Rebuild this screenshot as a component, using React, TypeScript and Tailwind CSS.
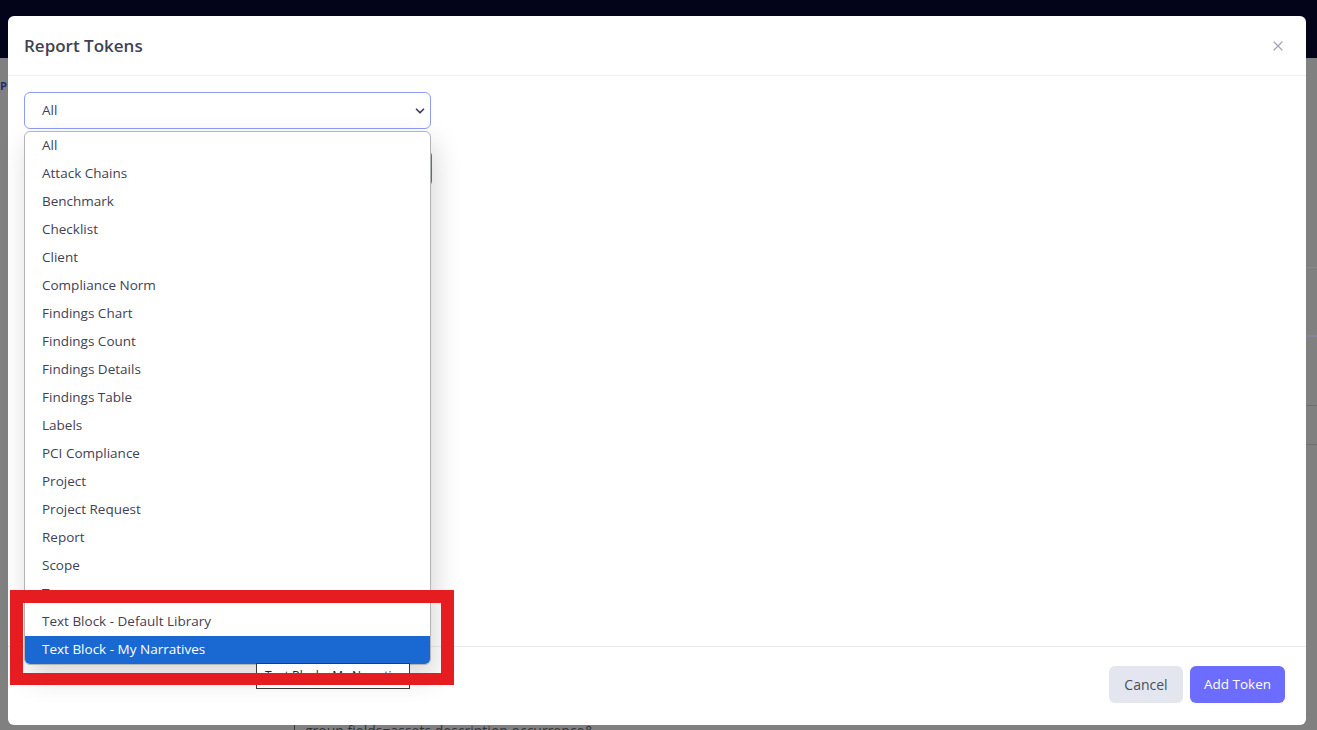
import { X, ChevronDown } from 'lucide-react'

const options = [
  'All',
  'Attack Chains',
  'Benchmark',
  'Checklist',
  'Client',
  'Compliance Norm',
  'Findings Chart',
  'Findings Count',
  'Findings Details',
  'Findings Table',
  'Labels',
  'PCI Compliance',
  'Project',
  'Project Request',
  'Report',
  'Scope',
  'Team',
  'Text Block - Default Library',
  'Text Block - My Narratives',
]

const selected = 'Text Block - My Narratives'

export default function App() {
  return (
    <div
      className="relative h-[730px] w-[1317px] overflow-hidden"
      style={{ fontFamily: '"Open Sans", "Noto Sans", sans-serif' }}
    >
      {/* Page underneath (dimmed) */}
      <div className="flex h-full flex-col">
        <div className="h-[58px] shrink-0 bg-[#03041a]" />
        <div className="flex min-h-0 flex-1 overflow-hidden bg-[#808080]">
          <div className="w-[8px] shrink-0 pt-[14px]">
            <span className="text-[11px] font-bold leading-none text-[#1f2a6b]">P</span>
          </div>
          <div className="flex flex-1 flex-col">
            <div className="h-[209px] shrink-0" />
            <div className="h-[68px] shrink-0 border-t border-[#8a8a8a]" />
            <div className="h-[70px] shrink-0 border-t-2 border-[#85849a]" />
            <div className="h-[39px] shrink-0 border-t border-[#6f6f6f]" />
            <div className="h-[278px] shrink-0 border-t border-[#6f6f6f]" />
            <div className="ml-[286px] shrink-0 border-l border-[#3a3a3a] pl-[10px] text-[14px] leading-[18px] text-[#333338]">
              group.fields=assets,description,occurrence&amp;
            </div>
          </div>
        </div>
      </div>

      {/* Modal */}
      <div className="absolute left-[8px] top-[16px] flex h-[709px] w-[1298px] flex-col rounded-md bg-white">
        <div className="flex h-[60px] shrink-0 items-center justify-between border-b border-[#eceef3] pl-4 pr-[20px]">
          <h2 className="text-[17px] font-semibold text-[#3f4254]">Report Tokens</h2>
          <X className="h-[16px] w-[16px] text-[#a1a5b7]" strokeWidth={1.8} />
        </div>

        <div className="relative flex-1 px-4 pt-[16px]">
          <div className="flex h-[37px] w-[407px] items-center justify-between rounded-md border border-[#8f9cf7] pl-[17px] pr-[3px] text-[13.5px] text-[#3f4254]">
            <span>All</span>
            <ChevronDown className="h-[14px] w-[14px]" strokeWidth={3} />
          </div>
          <div className="mt-[21px] h-[37px] w-[408px] rounded-md border border-[#e4e6ef] border-r-[#6b6bd0]" />

          {/* Open native list */}
          <div className="absolute left-4 top-[55px] z-10 w-[407px] overflow-hidden rounded-md border border-[#b4b4b4] bg-white shadow-[4px_12px_28px_rgba(0,0,0,0.16)]">
            {options.map((opt) => (
              <div
                key={opt}
                className={`flex h-[28px] items-center pb-[2px] pl-[17px] text-[13.5px] ${
                  opt === selected ? 'bg-[#1a68d2] font-medium text-white' : 'text-[#3f4254]'
                }`}
              >
                {opt}
              </div>
            ))}
          </div>
        </div>

        <div className="flex h-[79px] shrink-0 items-center justify-end gap-[7px] border-t border-[#ecebf5] pb-[3px] pr-[21px]">
          <button className="h-[37px] w-[74px] rounded-md bg-[#e4e6ef] text-[14px] text-[#4b4e60]">
            Cancel
          </button>
          <button className="h-[37px] w-[95px] rounded-md bg-[#6c6cff] text-[13.5px] font-medium text-white">
            Add Token
          </button>
        </div>
      </div>

      {/* Hover title */}
      <div className="absolute left-[256px] top-[663px] z-[15] h-[26px] w-[154px] overflow-hidden border border-[#3a3a3a] bg-white pl-[8px] pt-[3px] text-[12px] whitespace-nowrap text-[#222]">
        Text Block - My Narratives
      </div>

      {/* Annotation frame */}
      <div className="absolute left-[10px] top-[590px] z-20 h-[95px] w-[444px] border-[13px] border-b-[12px] border-[#e51c20]" />
    </div>
  )
}
